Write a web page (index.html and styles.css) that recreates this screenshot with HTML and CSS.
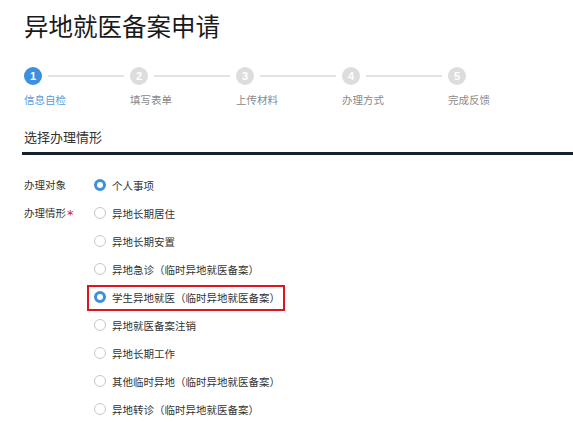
FILE: index.html
```html
<!DOCTYPE html>
<html lang="zh-CN">
<head>
<meta charset="utf-8">
<title>异地就医备案申请</title>
<link rel="stylesheet" href="styles.css">
</head>
<body>
<div class="page">
  <h1 class="title">异地就医备案申请</h1>
  <div class="steps">
    <div class="step active">
      <div class="step-head"><span class="dot">1</span><span class="bar"></span></div>
      <div class="step-label">信息自检</div>
    </div>
    <div class="step">
      <div class="step-head"><span class="dot">2</span><span class="bar"></span></div>
      <div class="step-label">填写表单</div>
    </div>
    <div class="step">
      <div class="step-head"><span class="dot">3</span><span class="bar"></span></div>
      <div class="step-label">上传材料</div>
    </div>
    <div class="step">
      <div class="step-head"><span class="dot">4</span><span class="bar"></span></div>
      <div class="step-label">办理方式</div>
    </div>
    <div class="step last">
      <div class="step-head"><span class="dot">5</span></div>
      <div class="step-label">完成反馈</div>
    </div>
  </div>
  <div class="section-head"><span>选择办理情形</span></div>
  <div class="form">
    <div class="form-row">
      <div class="form-label">办理对象</div>
      <div class="options">
        <div class="option"><span class="radio checked"></span><span>个人事项</span></div>
      </div>
    </div>
    <div class="form-row">
      <div class="form-label">办理情形<span class="req">*</span></div>
      <div class="options">
        <div class="option"><span class="radio"></span><span>异地长期居住</span></div>
        <div class="option"><span class="radio"></span><span>异地长期安置</span></div>
        <div class="option"><span class="radio"></span><span>异地急诊（临时异地就医备案）</span></div>
        <div class="option highlight"><span class="radio checked"></span><span>学生异地就医（临时异地就医备案）</span></div>
        <div class="option"><span class="radio"></span><span>异地就医备案注销</span></div>
        <div class="option"><span class="radio"></span><span>异地长期工作</span></div>
        <div class="option"><span class="radio"></span><span>其他临时异地（临时异地就医备案）</span></div>
        <div class="option"><span class="radio"></span><span>异地转诊（临时异地就医备案）</span></div>
      </div>
    </div>
  </div>
</div>
</body>
</html>
```
FILE: styles.css
```css
* { box-sizing: border-box; }
html, body { margin: 0; padding: 0; background: #fff; }
body {
  font-family: "Noto Sans CJK SC", "Noto Sans", sans-serif;
  color: #333;
  overflow: hidden;
}
.page { padding-left: 24px; }
.title {
  margin: 0;
  padding-top: 12px;
  font-size: 24.5px;
  line-height: 28px;
  font-weight: 400;
  color: #1a1a1a;
}
.steps {
  display: flex;
  margin-top: 27px;
}
.step { width: 106px; flex: none; }
.step-head {
  display: flex;
  align-items: center;
  height: 18px;
}
.dot {
  width: 18px;
  height: 18px;
  border-radius: 50%;
  background: #ddd;
  color: #fff;
  font-size: 11px;
  font-weight: 700;
  line-height: 18px;
  text-align: center;
  flex: none;
  font-family: "Liberation Sans", sans-serif;
}
.bar {
  flex: 1;
  height: 2px;
  background: #e2e2e2;
  margin: 0 6px;
}
.step-label {
  margin-top: 8px;
  font-size: 10.5px;
  line-height: 14px;
  color: #8a8a8a;
}
.step.active .dot { background: #3d8fe0; }
.step.active .step-label { color: #5a9be0; }

.section-head {
  margin-top: 21px;
  margin-left: -2px;
  padding-left: 2px;
  padding-bottom: 6px;
  border-bottom: 3px solid #18222f;
  font-size: 13px;
  line-height: 18px;
  color: #333;
}
.form { margin-top: 16px; }
.form-row { display: flex; }
.form-label {
  width: 69.5px;
  flex: none;
  font-size: 10.5px;
  line-height: 28px;
  color: #333;
}
.req {
  color: #e0141e;
  margin-left: 1px;
  font-size: 13px;
  font-family: "DejaVu Sans", sans-serif;
  position: relative;
  top: 2px;
}
.options { display: flex; flex-direction: column; }
.option {
  position: relative;
  display: flex;
  align-items: center;
  height: 28px;
  font-size: 10.5px;
  color: #333;
  gap: 6.5px;
  align-self: flex-start;
}
.radio {
  width: 12px;
  height: 12px;
  border-radius: 50%;
  border: 1px solid #c8c8c8;
  background: #fff;
  flex: none;
}
.radio.checked { border: 3.5px solid #3d8fe0; }
.highlight::after {
  content: "";
  position: absolute;
  top: 2px;
  bottom: 0;
  left: -7px;
  right: -5px;
  border: 2px solid #e0141e;
}
```
